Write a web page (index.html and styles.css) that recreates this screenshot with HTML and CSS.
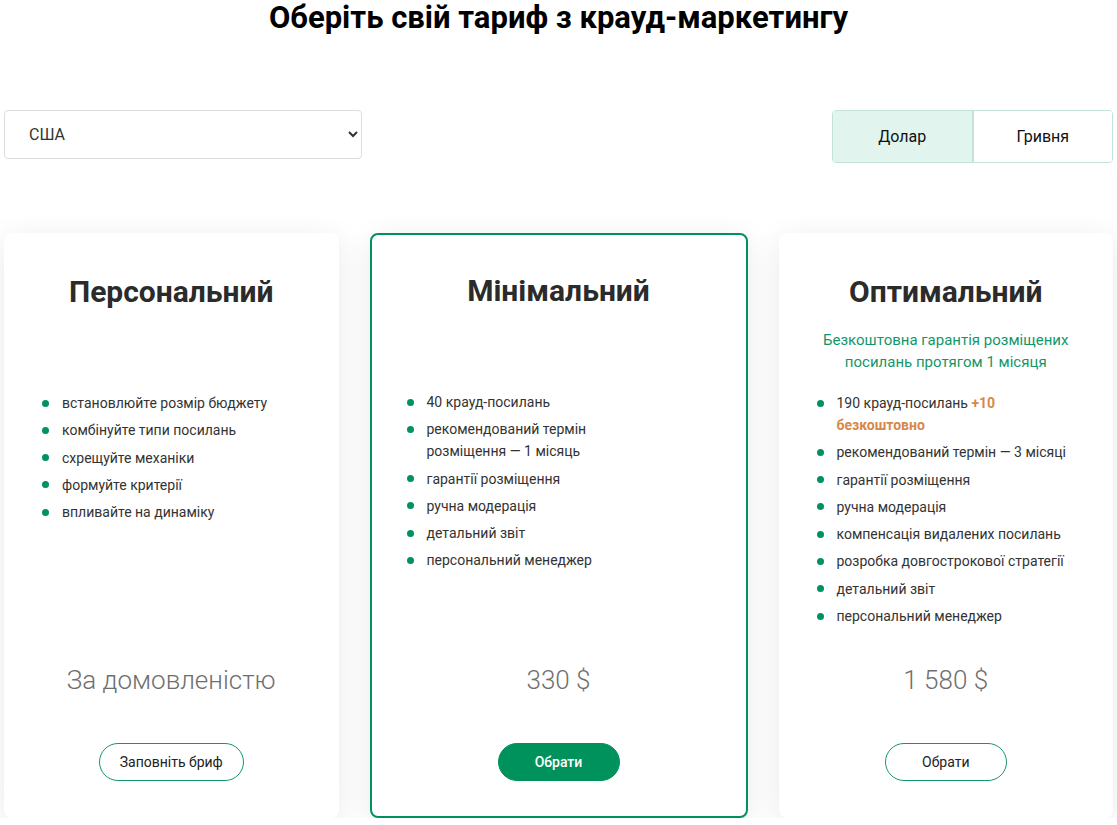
FILE: index.html
```html
<!doctype html>
<html lang="uk">
  <head>
    <meta charset="UTF-8" />
    <meta name="viewport" content="width=device-width, initial-scale=1.0" />
    <title>Тарифи крауд-маркетингу</title>
    <link rel="stylesheet" href="styles.css">
  </head>
  <body>
    <div class="page">
      <h1 class="title">Оберіть свій тариф з крауд-маркетингу</h1>

      <div class="controls">
        <select class="country" title="Країна">
          <option>США</option>
          <option>Україна</option>
          <option>Польща</option>
        </select>
        <div class="currency">
          <button class="currency-btn active">Долар</button>
          <button class="currency-btn">Гривня</button>
        </div>
      </div>

      <div class="plans">
        <div class="plan">
          <h2 class="plan-name">Персональний</h2>
          <div class="plan-note"></div>
          <ul class="features">
            <li>встановлюйте розмір бюджету</li>
            <li>комбінуйте типи посилань</li>
            <li>схрещуйте механіки</li>
            <li>формуйте критерії</li>
            <li>впливайте на динаміку</li>
          </ul>
          <div class="price">За домовленістю</div>
          <button class="plan-btn">Заповніть бриф</button>
        </div>

        <div class="plan featured">
          <h2 class="plan-name">Мінімальний</h2>
          <div class="plan-note"></div>
          <ul class="features">
            <li>40 крауд-посилань</li>
            <li>рекомендований термін розміщення — 1 місяць</li>
            <li>гарантії розміщення</li>
            <li>ручна модерація</li>
            <li>детальний звіт</li>
            <li>персональний менеджер</li>
          </ul>
          <div class="price">330 $</div>
          <button class="plan-btn filled">Обрати</button>
        </div>

        <div class="plan">
          <h2 class="plan-name">Оптимальний</h2>
          <div class="plan-note">Безкоштовна гарантія розміщених посилань протягом 1 місяця</div>
          <ul class="features">
            <li>190 крауд-посилань <b class="bonus">+10</b> <b class="bonus">безкоштовно</b></li>
            <li>рекомендований термін — 3 місяці</li>
            <li>гарантії розміщення</li>
            <li>ручна модерація</li>
            <li>компенсація видалених посилань</li>
            <li>розробка довгострокової стратегії</li>
            <li>детальний звіт</li>
            <li>персональний менеджер</li>
          </ul>
          <div class="price">1 580 $</div>
          <button class="plan-btn">Обрати</button>
        </div>
      </div>
    </div>
  </body>
</html>
```

FILE: styles.css
```css
body {
  margin: 0;
  font-family: Roboto, "Liberation Sans", sans-serif;
  color: #333;
  background: #fff;
}
.page {
  padding: 0 4px;
}
.title {
  margin: 0;
  font-size: 31px;
  line-height: 36px;
  font-weight: 700;
  color: #000;
  text-align: center;
}
.controls {
  display: flex;
  justify-content: space-between;
  align-items: flex-start;
  margin-top: 74px;
}
.country {
  width: 358px;
  height: 49px;
  padding: 0 4px 0 20px;
  font-family: inherit;
  font-size: 16px;
  color: #333;
  background: #fff;
  border: 1px solid #ddd;
  border-radius: 4px;
}
.currency {
  display: flex;
  width: 279px;
  height: 51px;
  border: 1px solid #c4e2d7;
  border-radius: 4px;
  overflow: hidden;
}
.currency-btn {
  flex: 1;
  border: 0;
  margin: 0;
  background: #fff;
  font-family: inherit;
  font-size: 16px;
  color: #111;
  cursor: pointer;
}
.currency-btn + .currency-btn {
  border-left: 2px solid #c4e2d7;
}
.currency-btn.active {
  background: #e1f5ee;
}
.plans {
  display: grid;
  grid-template-columns: 1fr 378px 1fr;
  gap: 31px;
  margin-top: 70px;
}
.plan {
  display: flex;
  flex-direction: column;
  align-items: center;
  height: 585px;
  box-sizing: border-box;
  padding: 42px 0 37px;
  background: #fff;
  border-radius: 8px;
  box-shadow: 0 6px 30px rgba(0, 0, 0, 0.09);
}
.plan.featured {
  border: 2px solid #00925d;
  padding: 39px 0 35px;
}
.plan-name {
  margin: 0;
  font-size: 30px;
  line-height: 34px;
  font-weight: 700;
  color: #2b2b2b;
}
.plan-note {
  min-height: 48px;
  margin: 20px 0 15px;
  padding: 0 30px;
  font-size: 15px;
  line-height: 22px;
  color: #12976a;
  text-align: center;
}
.features {
  list-style: none;
  align-self: flex-start;
  width: 234px;
  margin: 0;
  padding: 0 0 0 58px;
  font-size: 14px;
  line-height: 22px;
}
.featured .features {
  padding-left: 55px;
}
.features li {
  position: relative;
  margin-bottom: 5.3px;
}
.features li::before {
  content: "";
  position: absolute;
  left: -20px;
  top: 7.5px;
  width: 7px;
  height: 7px;
  border-radius: 50%;
  background: #00925d;
}
.bonus {
  color: #d6884a;
  font-weight: 700;
}
.price {
  margin-top: auto;
  font-size: 26px;
  line-height: 32px;
  font-weight: 300;
  color: #6f6f6f;
}
.plan-btn {
  margin-top: 47px;
  min-width: 122px;
  height: 38px;
  padding: 0 20px;
  font-family: inherit;
  font-size: 14px;
  color: #222;
  background: #fff;
  border: 1px solid #12976a;
  border-radius: 19px;
  cursor: pointer;
}
.plan-btn.filled {
  background: #00925d;
  border-color: #00925d;
  color: #fff;
  font-weight: 500;
}
```
